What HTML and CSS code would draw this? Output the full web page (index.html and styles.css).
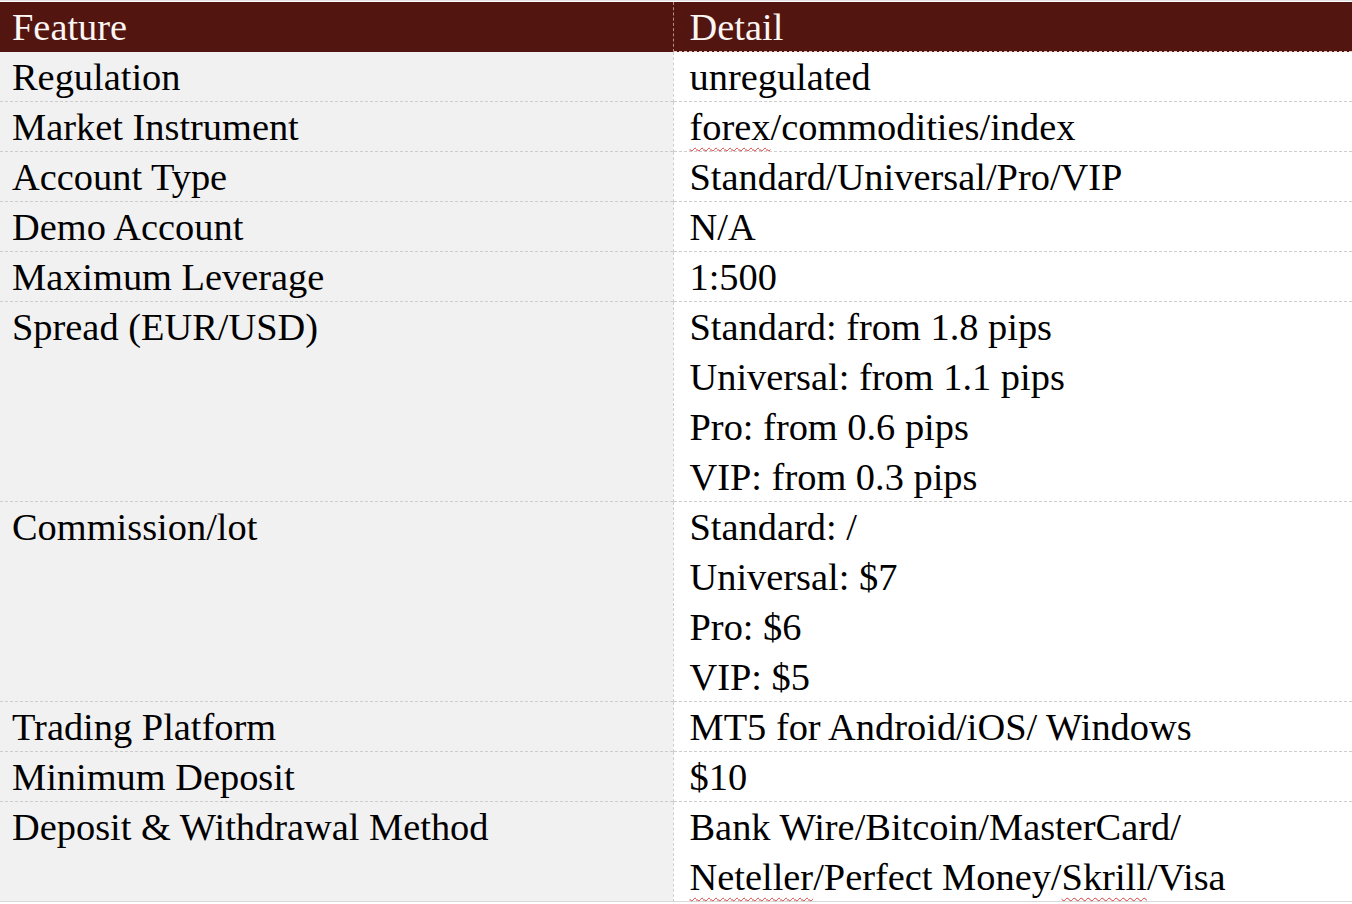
FILE: index.html
```html
<!DOCTYPE html>
<html lang="en">
<head>
<meta charset="utf-8">
<title>Feature / Detail</title>
<link rel="stylesheet" href="styles.css">
</head>
<body>
<table class="spec">
  <thead>
    <tr>
      <th class="feat">Feature</th>
      <th class="det">Detail</th>
    </tr>
  </thead>
  <tbody>
    <tr><td class="feat">Regulation</td><td class="det">unregulated</td></tr>
    <tr><td class="feat">Market Instrument</td><td class="det"><span class="spell">forex</span>/commodities/index</td></tr>
    <tr><td class="feat">Account Type</td><td class="det">Standard/Universal/Pro/VIP</td></tr>
    <tr><td class="feat">Demo Account</td><td class="det">N/A</td></tr>
    <tr><td class="feat">Maximum Leverage</td><td class="det">1:500</td></tr>
    <tr><td class="feat">Spread (EUR/USD)</td><td class="det">Standard: from 1.8 pips<br>Universal: from 1.1 pips<br>Pro: from 0.6 pips<br>VIP: from 0.3 pips</td></tr>
    <tr><td class="feat">Commission/lot</td><td class="det">Standard: /<br>Universal: $7<br>Pro: $6<br>VIP: $5</td></tr>
    <tr><td class="feat">Trading Platform</td><td class="det">MT5 for Android/iOS/ Windows</td></tr>
    <tr><td class="feat">Minimum Deposit</td><td class="det">$10</td></tr>
    <tr class="last"><td class="feat">Deposit &amp; Withdrawal Method</td><td class="det">Bank Wire/Bitcoin/MasterCard/<br><span class="spell">Neteller</span>/Perfect Money/<span class="spell">Skrill</span>/Visa</td></tr>
  </tbody>
</table>
</body>
</html>
```

FILE: styles.css
```css
html, body {
  margin: 0;
  padding: 0;
  background: #ffffff;
}

body {
  padding-top: 2px;
  border-top: 1px solid #e2e2e2;
  box-sizing: border-box;
}

.spec {
  width: 1352px;
  border-collapse: collapse;
  table-layout: fixed;
  font-family: "Liberation Serif", "Times New Roman", serif;
  font-size: 38.4px;
  line-height: 50px;
  color: #000;
  margin-top: -1px;
}

.spec th,
.spec td {
  padding: 0;
  text-align: left;
  vertical-align: top;
  font-weight: normal;
  background-repeat: no-repeat;
  background-position: left bottom;
  background-size: 100% 1px;
}

.spec .feat {
  width: 673px;
  padding-left: 12px;
  box-sizing: border-box;
}

.spec .det {
  padding-left: 16px;
  border-left: 1px dashed #cfcfcf;
}

.spec thead th {
  background-color: #53150f;
  color: #fbf6f4;
  height: 50px;
}

.spec thead th.det {
  border-left-color: #b88c86;
  background-image: repeating-linear-gradient(to right, #e8c8c4 0 3px, transparent 3px 5px);
}

.spec tbody td {
  background-image: repeating-linear-gradient(to right, #cdcdcd 0 3px, transparent 3px 5px);
}

.spec tbody td.feat {
  background-color: #f1f1f1;
}

.spec tbody td.det {
  background-color: #ffffff;
}

.spec tbody tr.last td {
  background-image: linear-gradient(#d9d9d9, #d9d9d9);
}

.spell {
  text-decoration-line: underline;
  text-decoration-style: wavy;
  text-decoration-color: #d23a3a;
  text-decoration-thickness: 1px;
  text-underline-offset: 7px;
}
```
